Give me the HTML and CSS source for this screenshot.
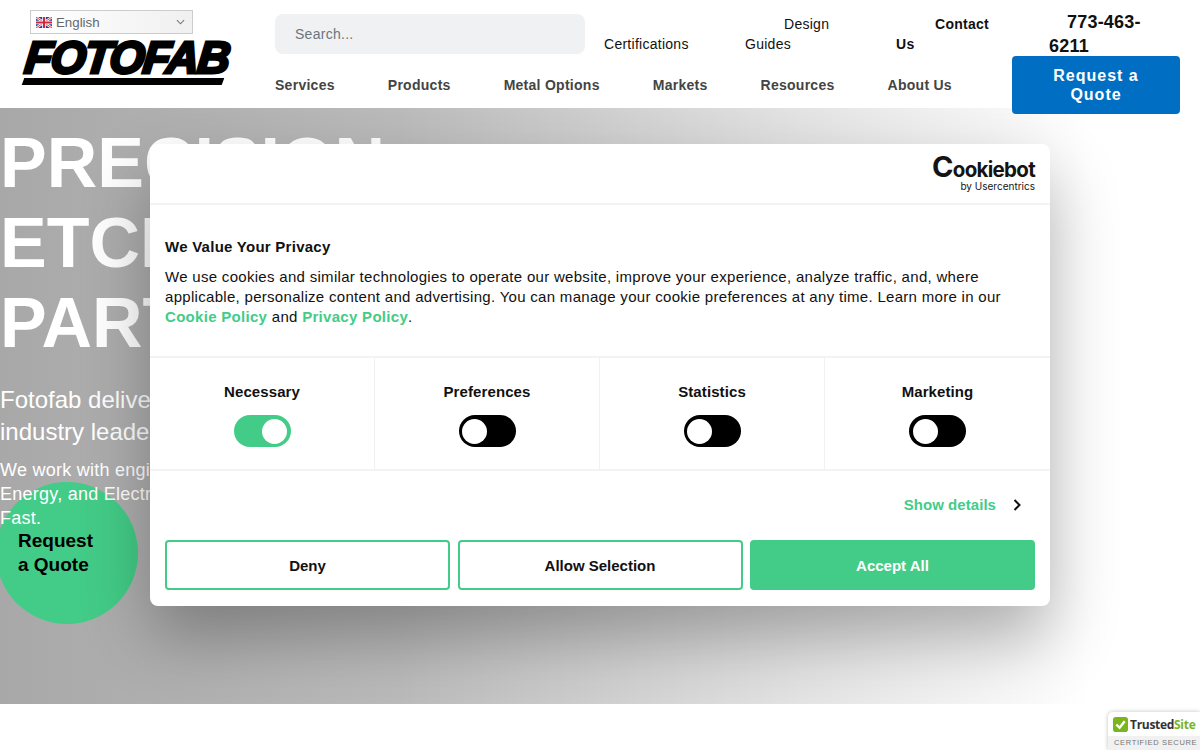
FILE: index.html
```html
<!DOCTYPE html>
<html lang="en">
<head>
  <meta charset="UTF-8">
  <meta name="viewport" content="width=device-width, initial-scale=1.0">
  <title>Fotofab - Precision Etched Parts</title>
  <link rel="stylesheet" href="styles.css">
</head>
<body>
  <!-- HEADER -->
  <header class="topo">
    <div class="marca">
      <div class="idioma">
        <svg class="bandeira" viewBox="0 0 16 11" width="16" height="11">
          <rect width="16" height="11" fill="#2b3f8f"/>
          <path d="M0 0L16 11M16 0L0 11" stroke="#fff" stroke-width="2.4"/>
          <path d="M0 0L16 11M16 0L0 11" stroke="#d2263c" stroke-width="0.9"/>
          <path d="M8 0V11M0 5.5H16" stroke="#fff" stroke-width="3.6"/>
          <path d="M8 0V11M0 5.5H16" stroke="#d2263c" stroke-width="2"/>
        </svg>
        <span>English</span>
        <svg class="seta" viewBox="0 0 10 6" width="9" height="6">
          <path d="M1 1L5 5L9 1" fill="none" stroke="#777" stroke-width="1.2"/>
        </svg>
      </div>
      <div class="logo">FOTOFAB</div>
      <div class="logo-barra"></div>
    </div>

    <div class="linha-topo">
      <div class="busca">Search...</div>
      <a class="link-topo link-cert"><br>Certifications</a>
      <a class="link-topo link-guias">Design<br>Guides</a>
      <a class="link-topo link-contato">Contact<br>Us</a>
      <a class="telefone">773-463-<br>6211</a>
    </div>

    <nav class="menu">
      <a>Services</a>
      <a>Products</a>
      <a>Metal Options</a>
      <a>Markets</a>
      <a>Resources</a>
      <a>About Us</a>
    </nav>

    <a class="botao-quote">Request a<br>Quote</a>
  </header>

  <!-- HERO + COOKIE DIALOG -->
  <section class="hero">
    <div class="circulo">Request<br>a Quote</div>
    <div class="hero-texto">
      <h1>PRECISION<br>ETCHED<br>PARTS</h1>
      <p class="sub">Fotofab delivers precision parts<br>industry leaders trust</p>
      <p class="desc">We work with engineers in Medical,<br>Energy, and Electronics<br>Fast.</p>
    </div>

    <div class="dialogo">
      <div class="dialogo-topo">
        <div class="cookiebot">
          <div class="cookiebot-nome"><span>C</span>ookiebot</div>
          <div class="cookiebot-sub">by Usercentrics</div>
        </div>
      </div>

      <div class="dialogo-corpo">
        <h2>We Value Your Privacy</h2>
        <p>We use cookies and similar technologies to operate our website, improve your experience, analyze traffic, and, where applicable, personalize content and advertising. You can manage your cookie preferences at any time. Learn more in our <a>Cookie Policy</a> and <a>Privacy Policy</a>.</p>
      </div>

      <div class="opcoes">
        <div class="opcao">
          <strong>Necessary</strong>
          <span class="chave ligada"></span>
        </div>
        <div class="opcao">
          <strong>Preferences</strong>
          <span class="chave"></span>
        </div>
        <div class="opcao">
          <strong>Statistics</strong>
          <span class="chave"></span>
        </div>
        <div class="opcao">
          <strong>Marketing</strong>
          <span class="chave"></span>
        </div>
      </div>

      <div class="detalhes">
        <a>Show details</a>
        <svg viewBox="0 0 8 12" width="8" height="12">
          <path d="M1.5 1L6.5 6L1.5 11" fill="none" stroke="#111" stroke-width="2"/>
        </svg>
      </div>

      <div class="botoes">
        <button class="botao">Deny</button>
        <button class="botao">Allow Selection</button>
        <button class="botao botao-aceitar">Accept All</button>
      </div>
    </div>
  </section>

  <!-- TRUST BADGE -->
  <div class="selo">
    <div class="selo-topo">
      <svg viewBox="0 0 16 16" width="15" height="15">
        <rect width="16" height="16" rx="3" fill="#7ab51d"/>
        <path d="M3.5 8L7 11.5L12.5 4.5" fill="none" stroke="#fff" stroke-width="2.6"/>
      </svg>
      <span>Trusted<em>Site</em></span>
    </div>
    <div class="selo-base">CERTIFIED SECURE</div>
  </div>
</body>
</html>
```

FILE: styles.css
```css
* {
  box-sizing: border-box;
}

body {
  margin: 0;
  height: 750px;
  overflow: hidden;
  position: relative;
  background-color: #fff;
  color: #111;
  font-family: "Liberation Sans", Arial, sans-serif;
}

/* Header */
.topo {
  height: 108px;
  display: grid;
  grid-template-columns: 275px 737px 168px;
  grid-template-rows: 56px 52px;
  position: relative;
  z-index: 2;
  background-color: #fff;
}

.marca {
  grid-row: 1 / 3;
  padding: 10px 0 0 22px;
}

.idioma {
  width: 163px;
  height: 24px;
  margin-left: 8px;
  padding: 0 7px 0 5px;
  display: flex;
  align-items: center;
  gap: 4px;
  border: 1px solid #ccc;
  background: linear-gradient(90deg, #fff, #f0f0f0);
  color: #666;
  font-size: 13.3px;
}

.seta {
  margin-left: auto;
}

.logo {
  margin: 6px 0 0 3px;
  height: 38px;
  width: 209px;
  color: #000;
  font-size: 45px;
  line-height: 36px;
  font-weight: bold;
  font-style: italic;
  letter-spacing: -1.5px;
  -webkit-text-stroke: 3px #000;
  white-space: nowrap;
  transform: skewX(-6deg);
}

.logo-barra {
  width: 200px;
  height: 7px;
  margin: 0 0 0 1px;
  background-color: #000;
  transform: skewX(-20deg);
}

.linha-topo {
  grid-column: 2 / 4;
  padding-top: 14px;
  display: flex;
  align-items: flex-start;
}

.busca {
  width: 310px;
  height: 40px;
  margin-right: 19px;
  padding-left: 20px;
  border-radius: 8px;
  background-color: #eff1f3;
  color: #6c757d;
  font-size: 14px;
  line-height: 40px;
  letter-spacing: 0.27px;
}

.link-topo {
  font-size: 14px;
  line-height: 20px;
  letter-spacing: 0.27px;
}

.link-cert {
  width: 141px;
}

.link-guias {
  width: 151px;
}

.link-guias,
.link-contato {
  text-indent: 39px;
}

.link-contato {
  width: 153px;
  font-weight: bold;
}

.telefone {
  margin-top: -4px;
  text-indent: 18px;
  font-size: 18px;
  line-height: 24px;
  font-weight: bold;
  letter-spacing: 0.2px;
  white-space: nowrap;
}

.menu {
  height: 58px;
  display: flex;
  align-items: center;
  gap: 53px;
  color: #444;
  font-size: 14px;
  font-weight: bold;
  letter-spacing: 0.27px;
}

.botao-quote {
  width: 168px;
  height: 58px;
  padding-top: 10px;
  border-radius: 4px;
  background-color: #006fc3;
  color: #fff;
  text-align: center;
  font-size: 16px;
  line-height: 19px;
  font-weight: bold;
  letter-spacing: 1px;
}

/* Hero */
.hero {
  height: 596px;
  position: relative;
  overflow: hidden;
  background: linear-gradient(90deg, #a8a8a8 0, #bbb 400px, #e4e4e4 800px, #fff 1090px);
}

.hero-texto {
  position: relative;
  z-index: 2;
  padding-top: 15px;
  color: #fff;
  white-space: nowrap;
}

.hero-texto h1 {
  margin: 0;
  font-size: 70px;
  line-height: 80px;
  font-weight: bold;
}

.sub {
  margin: 21px 0 0;
  font-size: 24px;
  line-height: 32px;
}

.desc {
  margin: 10px 0 0;
  font-size: 18px;
  line-height: 24px;
  letter-spacing: 0.25px;
}

.circulo {
  position: absolute;
  left: -4px;
  top: 374px;
  width: 142px;
  height: 142px;
  padding: 47px 0 0 22px;
  border-radius: 50%;
  background-color: #43cc87;
  color: #000;
  font-size: 19px;
  line-height: 24px;
  font-weight: bold;
  z-index: 1;
}

/* Cookie dialog */
.dialogo {
  position: absolute;
  left: 150px;
  top: 36px;
  width: 900px;
  height: 462px;
  border-radius: 8px;
  background-color: #fff;
  box-shadow: 0 32px 68px rgba(0, 0, 0, 0.3);
  z-index: 3;
}

.dialogo-topo {
  height: 61px;
  padding: 13px 15px 0 0;
  display: flex;
  justify-content: flex-end;
  border-bottom: 2px solid #f3f3f3;
}

.cookiebot {
  text-align: right;
  color: #141414;
  font-family: Inter, sans-serif;
}

.cookiebot-nome {
  font-size: 20.5px;
  line-height: 20px;
  font-weight: 700;
  letter-spacing: -0.7px;
}

.cookiebot-nome span {
  font-size: 29px;
  font-weight: 700;
  line-height: 20px;
}

.cookiebot-sub {
  font-size: 10px;
  line-height: 12px;
}

.dialogo-corpo {
  height: 153px;
  padding: 32px 15px 0;
  border-bottom: 2px solid #f3f3f3;
  font-size: 15px;
  line-height: 20px;
  letter-spacing: 0.3px;
}

.dialogo-corpo h2 {
  margin: 0 0 10px;
  font-size: 15px;
  line-height: 20px;
  font-weight: bold;
  letter-spacing: 0.26px;
}

.dialogo-corpo p {
  margin: 0;
}

.dialogo-corpo a {
  color: #43cc87;
  font-weight: bold;
}

.opcoes {
  height: 113px;
  display: grid;
  grid-template-columns: repeat(4, 225px);
  border-bottom: 2px solid #f3f3f3;
}

.opcao {
  padding-top: 24px;
  display: flex;
  flex-direction: column;
  align-items: center;
  gap: 13px;
  border-right: 1px solid #f1f1f1;
  font-size: 15px;
  line-height: 20px;
}

.opcao:last-child {
  border-right: 0;
}

.opcao strong {
  letter-spacing: 0.1px;
}

.chave {
  width: 57px;
  height: 32px;
  padding: 3.5px;
  display: flex;
  border-radius: 16px;
  background-color: #000;
}

.chave::after {
  content: "";
  width: 25px;
  height: 25px;
  border-radius: 50%;
  background-color: #fff;
}

.chave.ligada {
  justify-content: flex-end;
  background-color: #43cc87;
}

.detalhes {
  height: 69px;
  padding: 24px 29px 0 0;
  display: flex;
  justify-content: flex-end;
  align-items: flex-start;
  gap: 17px;
  color: #43cc87;
  font-size: 15px;
  line-height: 20px;
  font-weight: bold;
  letter-spacing: 0.05px;
}

.detalhes svg {
  margin-top: 4px;
}

.botoes {
  padding: 0 15px;
  display: grid;
  grid-template-columns: repeat(3, 1fr);
  gap: 7.5px;
}

.botao {
  height: 50px;
  border: 2px solid #43cc87;
  border-radius: 4px;
  background-color: #fff;
  color: #111;
  font-family: "Liberation Sans", Arial, sans-serif;
  font-size: 15px;
  font-weight: bold;
}

.botao-aceitar {
  background-color: #43cc87;
  color: #fff;
}

/* Trust badge */
.selo {
  position: absolute;
  right: 0;
  bottom: 0;
  width: 92px;
  height: 38px;
  border-top-left-radius: 5px;
  background-color: #fff;
  box-shadow: 0 0 4px rgba(0, 0, 0, 0.25);
  overflow: hidden;
}

.selo-topo {
  height: 24px;
  padding: 5px 0 0 5px;
  display: flex;
  align-items: flex-start;
  gap: 2px;
  color: #333;
  font-family: "Open Sans", sans-serif;
  font-size: 12px;
  line-height: 15px;
  font-weight: 700;
  letter-spacing: -0.3px;
  white-space: nowrap;
}

.selo-topo em {
  color: #7ab51d;
  font-style: normal;
}

.selo-base {
  height: 14px;
  padding-left: 6px;
  background-color: #f1f1f1;
  color: #777;
  font-size: 7.5px;
  line-height: 14px;
  letter-spacing: 0.65px;
  white-space: nowrap;
}
```
